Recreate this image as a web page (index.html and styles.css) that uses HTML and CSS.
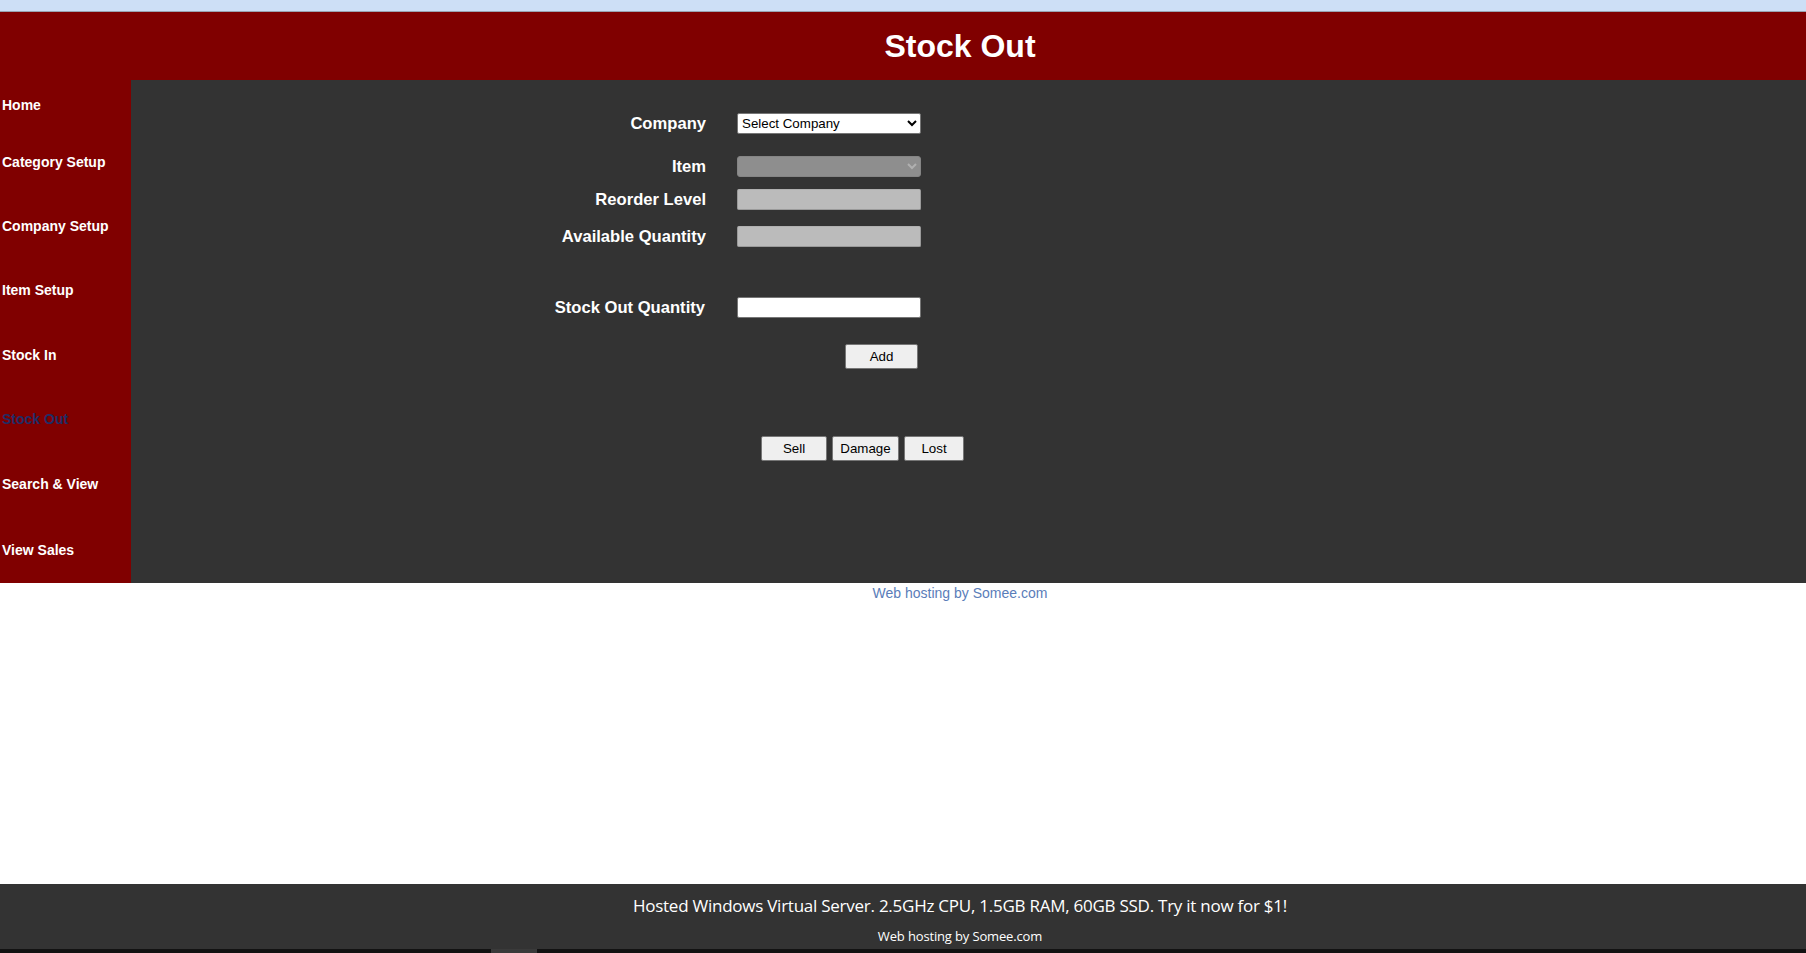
FILE: index.html
```html
<!DOCTYPE html>
<html>
<head>
<meta charset="utf-8">
<title>Stock Out</title>
<link rel="stylesheet" href="styles.css">
</head>
<body>
<div class="page">
  <div class="topbar"></div>
  <header class="header"><h1 class="title">Stock Out</h1></header>
  <div class="main">
    <nav class="sidebar">
      <a class="nav-item h50" href="#">Home</a>
      <a class="nav-item h63" href="#">Category Setup</a>
      <a class="nav-item h65" href="#">Company Setup</a>
      <a class="nav-item h64" href="#">Item Setup</a>
      <a class="nav-item h65" href="#">Stock In</a>
      <a class="nav-item h64 active" href="#">Stock Out</a>
      <a class="nav-item h65" href="#">Search &amp; View</a>
      <a class="nav-item h67" href="#">View Sales</a>
    </nav>
    <section class="content">
      <form class="form">
        <div class="row r1">
          <label class="label">Company</label>
          <select class="field select"><option>Select Company</option></select>
        </div>
        <div class="row r2">
          <label class="label">Item</label>
          <select class="field select disabled" disabled><option></option></select>
        </div>
        <div class="row r3">
          <label class="label">Reorder Level</label>
          <input class="field input ro" type="text" disabled>
        </div>
        <div class="row r4">
          <label class="label">Available Quantity</label>
          <input class="field input ro" type="text" disabled>
        </div>
        <div class="row r5">
          <label class="label label-shift">Stock Out Quantity</label>
          <input class="field input" type="text">
        </div>
        <div class="row r6">
          <span></span>
          <div class="add-cell"><button type="button" class="btn btn-add">Add</button></div>
        </div>
        <div class="actions">
          <button type="button" class="btn btn-sell">Sell</button>
          <button type="button" class="btn btn-damage">Damage</button>
          <button type="button" class="btn btn-lost">Lost</button>
        </div>
      </form>
    </section>
  </div>
  <div class="hosting"><a href="#">Web hosting by Somee.com</a></div>
</div>
<div class="adbar">
  <div class="ad-main">Hosted Windows Virtual Server. 2.5GHz CPU, 1.5GB RAM, 60GB SSD. Try it now for $1!</div>
  <div class="ad-sub">Web hosting by Somee.com</div>
</div>
<div class="hscroll"><div class="thumb"></div></div>
</body>
</html>
```
FILE: styles.css
```css
html, body {
  margin: 0;
  padding: 0;
  overflow: hidden;
  background: #ffffff;
}
body {
  width: 1920px;
  height: 953px;
  font-family: "Liberation Sans", Arial, sans-serif;
}
.page {
  width: 1920px;
}
.topbar {
  height: 11px;
  background: #cddff6;
  border-bottom: 1px solid #9aa3b1;
}
.header {
  height: 68px;
  background: #800000;
  display: flex;
  align-items: center;
  justify-content: center;
}
.title {
  margin: 0;
  color: #ffffff;
  font-size: 32px;
  font-weight: bold;
  line-height: 68px;
}
.main {
  display: flex;
  height: 503px;
}
.sidebar {
  width: 131px;
  background: #800000;
  display: flex;
  flex-direction: column;
}
.nav-item {
  display: flex;
  align-items: center;
  padding-left: 2px;
  color: #ffffff;
  font-weight: bold;
  font-size: 14px;
  text-decoration: none;
}
.nav-item.active {
  color: #1f2d66;
}
.h50 { height: 50px; }
.h63 { height: 63px; }
.h64 { height: 64px; }
.h65 { height: 65px; }
.h67 { height: 67px; }
.content {
  flex: 1;
  background: #333333;
  padding-top: 33px;
}
.form {
  display: flex;
  flex-direction: column;
}
.row {
  display: grid;
  grid-template-columns: 575px 184px;
  column-gap: 31px;
  align-items: center;
  height: 21px;
}
.r2 { margin-top: 22px; }
.r3 { margin-top: 12px; }
.r4 { margin-top: 16px; }
.r5 { margin-top: 50px; }
.r6 { margin-top: 26px; height: 25px; }
.label {
  text-align: right;
  color: #ffffff;
  font-weight: bold;
  font-size: 16.6px;
  white-space: nowrap;
}
.label-shift {
  margin-right: 1px;
}
.field {
  box-sizing: border-box;
  width: 184px;
  height: 21px;
  margin: 0;
  font-family: "Liberation Sans", Arial, sans-serif;
  font-size: 13.33px;
}
.select {
  background: #ffffff;
  color: #000000;
  border: 1px solid #767676;
  border-radius: 2px;
  padding: 0;
}
.select.disabled {
  opacity: 1;
  background: #8e8e8e;
  border: 1px solid #858585;
  border-radius: 3px;
  color: #b0b0b0;
}
.input {
  background: #ffffff;
  border: 1px solid #767676;
  border-radius: 2px;
  padding: 0 3px;
}
.input.ro {
  opacity: 1;
  background: #bbbbbb;
  border: 1px solid #9a9a9a;
  border-top-color: #b0b0b0;
}
.add-cell {
  display: flex;
  justify-content: flex-end;
  padding-right: 3px;
}
.btn {
  box-sizing: border-box;
  height: 25px;
  margin: 0;
  padding: 0;
  background: #efefef;
  color: #000000;
  border: 1px solid #767676;
  border-radius: 2px;
  font-family: "Liberation Sans", Arial, sans-serif;
  font-size: 13.33px;
}
.btn-add { width: 73px; }
.actions {
  display: flex;
  gap: 5px;
  margin-top: 67px;
  padding-left: 630px;
}
.btn-sell { width: 66px; }
.btn-damage { width: 67px; }
.btn-lost { width: 60px; }
.hosting {
  text-align: center;
  padding-top: 2px;
  font-size: 14px;
  line-height: 17px;
}
.hosting a {
  color: #5a7db9;
  text-decoration: none;
}
.adbar {
  position: fixed;
  left: 0;
  bottom: 4px;
  width: 1920px;
  height: 65px;
  background: #333333;
  color: #ffffff;
  text-align: center;
  font-family: "Open Sans", "Noto Sans", sans-serif;
}
.ad-main {
  padding-top: 11px;
  font-size: 17px;
  line-height: 22px;
  letter-spacing: -0.25px;
}
.ad-sub {
  padding-top: 11px;
  font-size: 13px;
  line-height: 16px;
  letter-spacing: -0.15px;
}
.hscroll {
  position: fixed;
  left: 0;
  bottom: 0;
  width: 1920px;
  height: 4px;
  background: #121212;
}
.thumb {
  margin-left: 491px;
  width: 46px;
  height: 4px;
  background: #3a3a3a;
}
```
